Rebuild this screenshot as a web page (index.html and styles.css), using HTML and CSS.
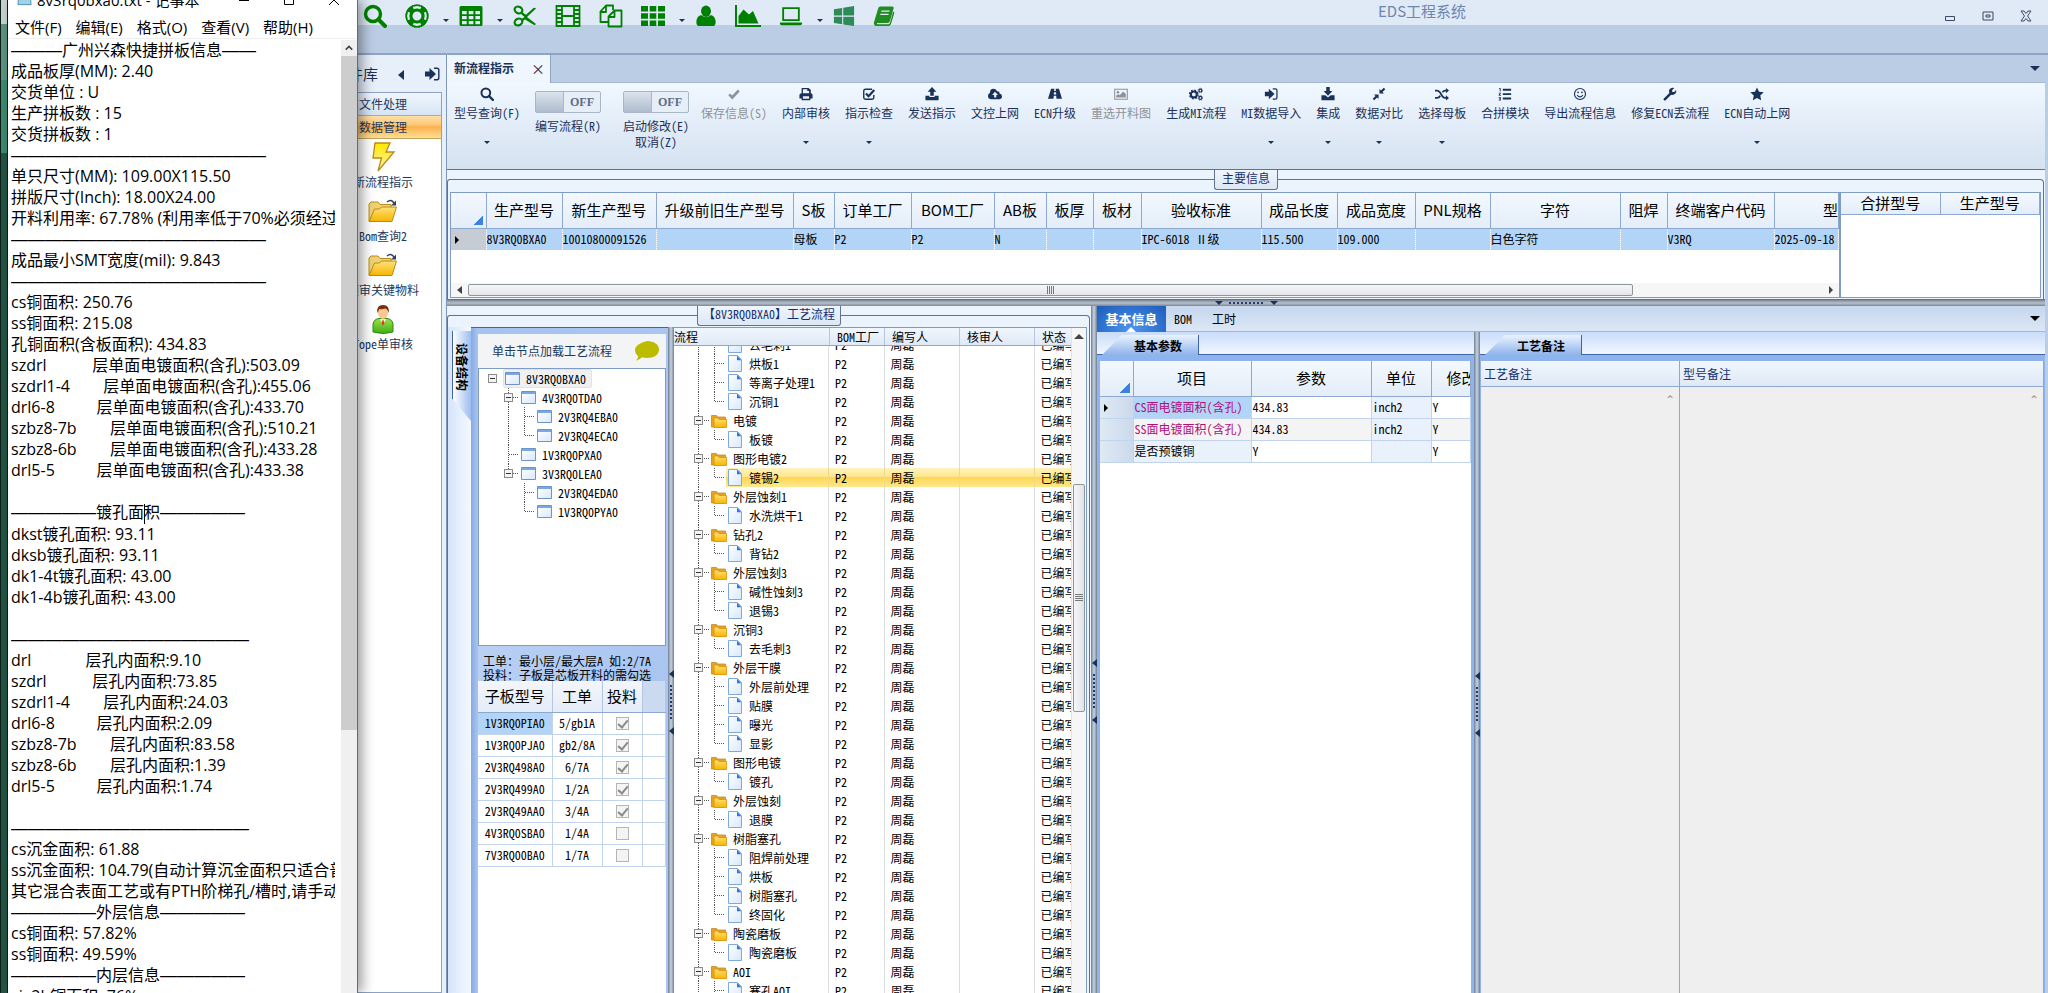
FILE: index.html
```html
<!DOCTYPE html>
<html lang="zh-CN">
<head>
<meta charset="utf-8">
<title>EDS工程系统</title>
<link rel="stylesheet" href="styles.css">
</head>
<body>
<svg class="defs" aria-hidden="true">
  <defs>
    <linearGradient id="gy" x1="0" y1="0" x2="0" y2="1"><stop offset="0" stop-color="#ffe27a"/><stop offset="1" stop-color="#f7b500"/></linearGradient>
    <linearGradient id="gb" x1="0" y1="0" x2="1" y2="1"><stop offset="0" stop-color="#ffffff"/><stop offset="1" stop-color="#d8e8fc"/></linearGradient>
    <linearGradient id="gl" x1="0" y1="0" x2="0" y2="1"><stop offset="0" stop-color="#ffe900"/><stop offset="1" stop-color="#fff0b0"/></linearGradient>
    <linearGradient id="gg" x1="0" y1="0" x2="0" y2="1"><stop offset="0" stop-color="#9be04a"/><stop offset="1" stop-color="#3fae12"/></linearGradient>
  </defs>
  <symbol id="search" viewBox="0 0 24 24"><circle cx="10" cy="10" r="7.500" fill="none" stroke="currentColor" stroke-width="3.400"/><path d="M15.500 15.500l6.500 6.500" stroke="currentColor" stroke-width="4" stroke-linecap="round"/></symbol>
  <symbol id="ring" viewBox="0 0 24 24"><circle cx="12" cy="12" r="8" fill="none" stroke="currentColor" stroke-width="7"/><g fill="none" stroke="#dfeaf6" stroke-width="3.600"><path d="M8 3.500a9.500 9.500 0 0 1 8 0M8 20.500a9.500 9.500 0 0 0 8 0M3.500 8a9.500 9.500 0 0 0 0 8M20.500 8a9.500 9.500 0 0 1 0 8"/></g><circle cx="12" cy="12" r="10.700" fill="none" stroke="currentColor" stroke-width="1.600"/></symbol>
  <symbol id="table" viewBox="0 0 24 24"><path fill="currentColor" fill-rule="evenodd" d="M2 2h20q1.500 0 1.500 1.500v17q0 1.500-1.500 1.500H2q-1.500 0-1.500-1.500v-17Q.5 2 2 2zM3 7v3.300h4.700V7zm6.700 0v3.300h4.700V7zm6.700 0v3.300H21V7zM3 12v3.300h4.700V12zm6.700 0v3.300h4.700V12zm6.700 0v3.300H21V12zM3 17v3.200h4.700V17zm6.700 0v3.200h4.700V17zm6.700 0v3.200H21V17z"/></symbol>
  <symbol id="cut" viewBox="0 0 24 24"><g fill="none" stroke="currentColor" stroke-width="2.200"><ellipse cx="5.500" cy="6" rx="4" ry="3.200" transform="rotate(25 5.500 6)"/><ellipse cx="5.500" cy="18" rx="4" ry="3.200" transform="rotate(-25 5.500 18)"/></g><path fill="currentColor" d="M8 7.500l5 3.200L20.500 4q1.500-.8 2.500.5L14 13l9 7q-1 1.500-2.800.6L12 15.500 9 17.500l-1-2L11.500 13 7.500 9.500z"/></symbol>
  <symbol id="film" viewBox="0 0 26 24"><g fill="none" stroke="currentColor" stroke-width="1.800"><path d="M1.500 2h23v20h-23zM7 2v20M19 2v20M7 12h12M1.500 6h5.500M1.500 10h5.500M1.500 14h5.500M1.500 18h5.500M19 6h5.500M19 10h5.500M19 14h5.500M19 18h5.500"/></g></symbol>
  <symbol id="copy" viewBox="0 0 24 24"><g fill="none" stroke="currentColor" stroke-width="1.800" stroke-linejoin="round"><path d="M9.500 18H1.500V7.500L7 1.500h7V6M7 1.500V8H1.500"/><path d="M15.500 6.500H22.500V22.500H9.500V12.500zM15.500 6.500V13H9.500"/></g></symbol>
  <symbol id="grid" viewBox="0 0 24 24"><path fill="currentColor" d="M0 2h7v5.500H0zM8.700 2h6.600v5.500H8.700zM17 2h7v5.500h-7zM0 9.300h7v5.400H0zM8.700 9.300h6.600v5.400H8.700zM17 9.300h7v5.400h-7zM0 16.500h7V22H0zM8.700 16.500h6.600V22H8.700zM17 16.500h7V22h-7z"/></symbol>
  <symbol id="user" viewBox="0 0 24 24"><ellipse cx="12" cy="6.800" rx="5.400" ry="6.200" fill="currentColor"/><path fill="currentColor" d="M6.500 11q5.500 4.500 11 0 5 1.500 5 8 0 4-3.500 4H5q-3.500 0-3.500-4 0-6.500 5-8z"/></symbol>
  <symbol id="area" viewBox="0 0 26 24"><path fill="currentColor" d="M0 1h2v20h24v2H0zM3.500 19.500V12l5-6.500 5.500 5 4-3.500 5.500 12.500z"/></symbol>
  <symbol id="laptop" viewBox="0 0 26 24"><path fill="none" stroke="currentColor" stroke-width="2" d="M4.500 3.500h17v13h-17z"/><path fill="currentColor" d="M1 19h24v1.500q0 1.500-2 1.500H3q-2 0-2-1.500z"/></symbol>
  <symbol id="windows" viewBox="0 0 24 24"><path fill="currentColor" d="M1 4.500l9-1.300v8.300H1zM11.200 3L23 1v10.500H11.200zM1 12.700h9v8.200L1 19.600zM11.200 12.700H23V23l-11.800-1.700z"/></symbol>
  <symbol id="book" viewBox="0 0 24 24"><path fill="currentColor" fill-rule="evenodd" d="M8 1.500h13q2 0 1.500 2l-4 14q-.5 2-2.500 2H4.500q-1 1 .5 1.500h11.500q1.500 0 2-1.500L22 7q1.500.5 1.200 2l-3.700 12q-.8 2-2.500 2H4Q.5 22.500 1 19L5.500 4Q6 1.500 8 1.500zM9.300 6l-.4 1.300h9L18.300 6zM8.200 9.500l-.4 1.300h9l.4-1.300z"/></symbol>
  <symbol id="check" viewBox="0 0 16 16"><path d="M2.500 8.500l3.500 3.500L13.500 4" fill="none" stroke="currentColor" stroke-width="3"/></symbol>
  <symbol id="print" viewBox="0 0 16 16"><path fill="currentColor" fill-rule="evenodd" d="M3 1h8l2.500 2.500V7q2 0 2 2v4H13v2H3v-2H.5V9q0-2 2.500-2zm1.500 1.500V7h7V4.500h-2v-2zM4.500 10.500v3h7v-3z"/></symbol>
  <symbol id="checksq" viewBox="0 0 16 16"><path d="M13.500 9v3q0 2-2 2H4q-2 0-2-2V4.500q0-2 2-2h7.500" fill="none" stroke="currentColor" stroke-width="1.600"/><path d="M4.500 7.500l3 3 6.500-7" fill="none" stroke="currentColor" stroke-width="2.600"/></symbol>
  <symbol id="upload" viewBox="0 0 16 16"><path fill="currentColor" d="M8 0l5 5.500h-3V10H6V5.500H3zM.5 10H5v1.500h6V10h4.500v5H.5z"/></symbol>
  <symbol id="download" viewBox="0 0 16 16"><path fill="currentColor" d="M6 0h4v4.500h3L8 10 3 4.500h3zM.5 9.500H5L8 12l3-2.500h4.500V15H.5z"/></symbol>
  <symbol id="cloud" viewBox="0 0 16 16"><path fill="currentColor" fill-rule="evenodd" d="M4 14q-4 0-4-3.700Q0 7.500 2.300 6.700 2 2 6.500 2q3 0 4 3 2.500-.6 2.800 2.500Q16 8 16 10.700 16 14 12.700 14zM8 5.500L4.700 9H7v3h2.500V9h2z"/></symbol>
  <symbol id="road" viewBox="0 0 16 16"><path fill="currentColor" fill-rule="evenodd" d="M3.500 2h3.700L7 4.500h2L8.800 2h3.700L16 13.500H9.700L9.400 10H6.600l-.3 3.500H0zM6.800 6l-.2 2.500h2.800L9.200 6z"/></symbol>
  <symbol id="image" viewBox="0 0 16 16"><path d="M.8 2.500h14.400v11.500H.8z" fill="none" stroke="currentColor" stroke-width="1.200"/><circle cx="4.500" cy="6" r="1.500" fill="currentColor"/><path fill="currentColor" d="M2.500 12v-2l2.500-2 1.500 1.300L10.500 5l3 3v4z"/></symbol>
  <symbol id="cogs" viewBox="0 0 16 16"><circle cx="5.500" cy="8.500" r="3.400" fill="none" stroke="currentColor" stroke-width="2.400"/><circle cx="5.500" cy="8.500" r="4.900" fill="none" stroke="currentColor" stroke-width="1.500" stroke-dasharray="2 1.850"/><g fill="none" stroke="currentColor"><circle cx="13" cy="4" r="1.700" stroke-width="1.400"/><circle cx="13" cy="4" r="2.700" stroke-width=".8" stroke-dasharray="1.100 1"/><circle cx="13" cy="12.500" r="1.700" stroke-width="1.400"/><circle cx="13" cy="12.500" r="2.700" stroke-width=".8" stroke-dasharray="1.100 1"/></g></symbol>
  <symbol id="signin" viewBox="0 0 16 16"><path fill="currentColor" d="M1 5.500h4.500V2L12 8l-6.500 6v-3.500H1z"/><path d="M10 2.200h3q1.800 0 1.800 1.800v8q0 1.800-1.800 1.800h-3" fill="none" stroke="currentColor" stroke-width="1.400"/></symbol>
  <symbol id="compress" viewBox="0 0 16 16"><path fill="currentColor" d="M8.500 7.500V2.300l1.700 1.700L13.500.8l1.700 1.700L12 5.800l1.700 1.700zM7.500 8.500v5.200L5.800 12l-3.300 3.200-1.700-1.700L4 10.200 2.300 8.500z"/></symbol>
  <symbol id="random" viewBox="0 0 16 16"><path d="M0 4h2.500Q4.500 4 6 6.500l2 3.500q1.500 2.500 3.500 2.500h1.500M0 12.500h2.500Q4.500 12.500 6 10M8.500 6Q10 4 11.500 4H13" fill="none" stroke="currentColor" stroke-width="2"/><path fill="currentColor" d="M12.500 1L16 4l-3.500 3zM12.500 9.500l3.500 3-3.500 3z"/></symbol>
  <symbol id="listol" viewBox="0 0 16 16"><path fill="currentColor" d="M5.500 2H15v2.200H5.500zM5.500 7H15v2.200H5.500zM5.500 12H15v2.200H5.500zM1.500 1H3v4H2V2.300h-.8zM.8 6.500H3.200V8L2 9h1.200v.9H.8V9l1.400-1.500H.8zM.8 11.500h2.400v4H.8v-.8h1.400v-.8H1v-.8h1.200v-.8H.8z"/></symbol>
  <symbol id="smile" viewBox="0 0 16 16"><circle cx="8" cy="8" r="6.300" fill="none" stroke="currentColor" stroke-width="1.300"/><path d="M4.700 9.300q3.300 4 6.600 0" fill="none" stroke="currentColor" stroke-width="1.200"/><circle cx="5.800" cy="6" r="1" fill="currentColor"/><circle cx="10.200" cy="6" r="1" fill="currentColor"/></symbol>
  <symbol id="wrench" viewBox="0 0 16 16"><path fill="currentColor" d="M1 13l6.300-6.200Q6 3.500 8.500 1.700 10.500.3 13 1.200L10.500 3.500v2.200h2.300L15 3.500q.7 2.500-1 4.300-2 1.800-4.700 1L3 15.200Q1.800 16 1 15t0-2z"/></symbol>
  <symbol id="star" viewBox="0 0 16 16"><path fill="currentColor" d="M8 .5l2.300 5 5.400.6-4 3.700 1.100 5.400L8 12.500l-4.800 2.700 1.100-5.400-4-3.700 5.400-.6z"/></symbol>
  <symbol id="page" viewBox="0 0 14 17"><path d="M.5.500h9l4 4v12H.5z" fill="url(#gb)" stroke="#7fa9de"/><path d="M9 .8l4.300 4.400H9z" fill="#2f72d8"/></symbol>
  <symbol id="folders" viewBox="0 0 16 14"><path d="M.5 1.500h5l1 1.500h8v10H.5z" fill="#e8a41c" stroke="#b98a3a" stroke-width=".8"/><path d="M3 4h4l1 1.500h7.500v8H3z" fill="url(#gy)" stroke="#e08e00" stroke-width=".8"/></symbol>
  <symbol id="win" viewBox="0 0 15 13"><path d="M.5.500h14v12H.5z" fill="url(#gb)" stroke="#6f93c4"/><path d="M1 1h13v2H1z" fill="#7aa7e6"/></symbol>
  <symbol id="openfolder" viewBox="0 0 30 24"><path d="M1 22V5l2-2h7l2 2.500h11V11" fill="#efd275" stroke="#b98a1a"/><path d="M1 22.500L6.500 10h5l2-2h15L24 22.500z" fill="url(#gy)" stroke="#b98a1a"/><path d="M19 3q4-3.500 7 1" fill="none" stroke="#33415c" stroke-width="1.400"/><path d="M28 1.500V6.500h-5z" fill="#33415c"/></symbol>
</svg>

<div class="app">
  <header class="topbar">
    <div class="tools">
      <button aria-label="查询"><svg><use href="#search"/></svg></button>
      <button class="dd" aria-label="帮助"><svg><use href="#ring"/></svg></button>
      <button class="dd" aria-label="表格"><svg><use href="#table"/></svg></button>
      <button aria-label="剪切"><svg><use href="#cut"/></svg></button>
      <button class="wide" aria-label="胶片"><svg><use href="#film"/></svg></button>
      <button aria-label="复制"><svg><use href="#copy"/></svg></button>
      <button class="dd" aria-label="网格"><svg><use href="#grid"/></svg></button>
      <button class="slim" aria-label="用户"><svg><use href="#user"/></svg></button>
      <button class="wide" aria-label="图表"><svg><use href="#area"/></svg></button>
      <button class="dd" aria-label="电脑"><svg><use href="#laptop"/></svg></button>
      <button class="slim sea" aria-label="窗口"><svg><use href="#windows"/></svg></button>
      <button class="slim leaf" aria-label="手册"><svg><use href="#book"/></svg></button>
    </div>
    <h1>EDS工程系统</h1>
    <div class="winctl">
      <button aria-label="最小化"><svg viewBox="0 0 12 12"><path d="M1.500 6.500h9v4h-9z"/></svg></button>
      <button aria-label="还原"><svg viewBox="0 0 12 12"><path d="M1 2h10v8H1zM4 5h4v2H4z"/></svg></button>
      <button aria-label="关闭"><svg viewBox="0 0 12 12"><path d="M1 1h3l2 2.500L8 1h3L7.500 6 11 11H8L6 8.500 4 11H1l3.500-5z"/></svg></button>
    </div>
  </header>
  <div class="band"></div>

  <div class="body">
    <aside class="side">
      <div class="side-head"><span>组件库</span><button aria-label="收起"><i class="tri-l"></i></button><button aria-label="固定"><svg class="i16"><use href="#signin"/></svg></button></div>
      <div class="side-body">
        <button class="acc">文件处理</button>
        <button class="acc on">数据管理</button>
        <a class="item" href="#"><svg viewBox="0 0 24 30"><path d="M4 1h15l-4 9h8L7 29l3.500-13H2z" fill="url(#gl)" stroke="#b98a1a" stroke-width="1.300"/></svg>新流程指示</a>
        <a class="item" href="#"><svg><use href="#openfolder"/></svg>Bom查询2</a>
        <a class="item" href="#"><svg><use href="#openfolder"/></svg>预审关键物料</a>
        <a class="item" href="#"><svg viewBox="0 0 24 30"><path d="M2 28V20q1-5 6-5.500h8q5 .5 6 5.500v8q-10 3-20 0z" fill="url(#gg)" stroke="#2c8a10"/><path d="M9 15h6l-3 6z" fill="#fff"/><path d="M12 15l1.500 4-1.500 3-1.500-3z" fill="#e03a1a"/><ellipse cx="12" cy="9" rx="5" ry="6" fill="#f6c98f"/><path d="M6.500 9Q5 1 12 1t5.500 8q-1-4-3-4.500-4 1-6 .5z" fill="#7a2e10"/></svg>Tope单审核</a>
      </div>
    </aside>

    <main class="main">
      <nav class="doctabs"><button class="doctab">新流程指示<span class="x">×</span></button><button class="menu-caret" aria-label="更多"><i class="tri-d"></i></button></nav>

      <div class="ribbon">
        <button class="rb d"><svg><use href="#search"/></svg>型号查询(F)</button>
        <div class="tg"><button role="switch" aria-checked="false" aria-labelledby="t1"><i></i><span>OFF</span></button><label id="t1">编写流程(R)</label></div>
        <div class="tg"><button role="switch" aria-checked="false" aria-labelledby="t2"><i></i><span>OFF</span></button><label id="t2">启动修改(E)<br>取消(Z)</label></div>
        <button class="rb" disabled><svg><use href="#check"/></svg>保存信息(S)</button>
        <button class="rb d"><svg><use href="#print"/></svg>内部审核</button>
        <button class="rb d"><svg><use href="#checksq"/></svg>指示检查</button>
        <button class="rb"><svg><use href="#upload"/></svg>发送指示</button>
        <button class="rb"><svg><use href="#cloud"/></svg>文控上网</button>
        <button class="rb"><svg><use href="#road"/></svg>ECN升级</button>
        <button class="rb" disabled><svg><use href="#image"/></svg>重选开料图</button>
        <button class="rb"><svg><use href="#cogs"/></svg>生成MI流程</button>
        <button class="rb d"><svg><use href="#signin"/></svg>MI数据导入</button>
        <button class="rb d"><svg><use href="#download"/></svg>集成</button>
        <button class="rb d"><svg><use href="#compress"/></svg>数据对比</button>
        <button class="rb d"><svg><use href="#random"/></svg>选择母板</button>
        <button class="rb"><svg><use href="#listol"/></svg>合拼模块</button>
        <button class="rb"><svg><use href="#smile"/></svg>导出流程信息</button>
        <button class="rb"><svg><use href="#wrench"/></svg>修复ECN丢流程</button>
        <button class="rb d"><svg><use href="#star"/></svg>ECN自动上网</button>
      </div>

      <section class="info">
        <h2 class="cap">主要信息</h2>
        <div class="info-grids">
          <div class="grid-box main-grid">
            <table class="big">
              <colgroup><col class="w35"><col class="w76"><col class="w94"><col class="w137"><col class="w41"><col class="w77"><col class="w83"><col class="w52"><col class="w47"><col class="w48"><col class="w120"><col class="w76"><col class="w78"><col class="w75"><col class="w130"><col class="w47"><col class="w107"><col></colgroup>
              <thead><tr><th class="corner"></th><th>生产型号</th><th>新生产型号</th><th>升级前旧生产型号</th><th>S板</th><th>订单工厂</th><th>BOM工厂</th><th>AB板</th><th>板厚</th><th>板材</th><th>验收标准</th><th>成品长度</th><th>成品宽度</th><th>PNL规格</th><th>字符</th><th>阻焊</th><th>终端客户代码</th><th class="cut">型</th></tr></thead>
              <tbody><tr class="cur"><td class="ind"><i class="tri-r"></i></td><td>8V3RQ0BXA0</td><td>10010800091526</td><td></td><td>母板</td><td>P2</td><td>P2</td><td>N</td><td></td><td></td><td>IPC-6018 Ⅱ级</td><td>115.500</td><td>109.000</td><td></td><td>白色字符</td><td></td><td>V3RQ</td><td>2025-09-18</td></tr></tbody>
            </table>
            <div class="hscroll"><i class="tri-l g"></i><div class="htrack"><div class="hthumb"><i class="grip"></i></div></div><i class="tri-r g"></i></div>
          </div>
          <div class="grid-box sub-grid">
            <table class="big short"><thead><tr><th>合拼型号</th><th>生产型号</th></tr></thead></table>
          </div>
        </div>
      </section>

      <div class="split-h"><i class="tri-d"></i><i class="dots"></i><i class="tri-d"></i></div>

      <div class="lower">
        <section class="flow">
          <h2 class="cap">【8V3RQ0BXA0】工艺流程</h2>
          <div class="flow-body">
            <div class="vtabs"><button>设备结构</button></div>
            <div class="struct">
              <div class="hint"><span>单击节点加载工艺流程</span><svg viewBox="0 0 26 20"><path d="M13 0C20 0 25 3.500 25 8.500S20 17 13 17q-3 0-5-.7Q5.500 19 2 19.800 4.500 17.500 4 15 1 12.500 1 8.500 1 3.500 13 0z" fill="#bdbb00"/></svg></div>
              <ul class="tree">
                <li class="l0"><button class="exp" aria-label="收起"></button><span class="nd sel"><svg><use href="#win"/></svg>8V3RQ0BXA0</span></li>
                <li class="l1 e"><button class="exp" aria-label="收起"></button><span class="nd"><svg><use href="#win"/></svg>4V3RQ0TDA0</span></li>
                <li class="l2"><span class="nd"><svg><use href="#win"/></svg>2V3RQ4EBA0</span></li>
                <li class="l2 end"><span class="nd"><svg><use href="#win"/></svg>2V3RQ4ECA0</span></li>
                <li class="l1"><span class="nd"><svg><use href="#win"/></svg>1V3RQ0PXA0</span></li>
                <li class="l1 e end"><button class="exp" aria-label="收起"></button><span class="nd"><svg><use href="#win"/></svg>3V3RQ0LEA0</span></li>
                <li class="l2 nov"><span class="nd"><svg><use href="#win"/></svg>2V3RQ4EDA0</span></li>
                <li class="l2 nov end"><span class="nd"><svg><use href="#win"/></svg>1V3RQ0PYA0</span></li>
              </ul>
              <p class="note">工单：最小层/最大层A 如:2/7A<br>投料：子板是芯板开料的需勾选</p>
              <div class="subs">
                <table>
                  <colgroup><col class="w74"><col class="w50"><col class="w40"><col></colgroup>
                  <thead><tr><th>子板型号</th><th>工单</th><th>投料</th><th class="fill"></th></tr></thead>
                  <tbody>
                    <tr><td class="hl">1V3RQ0PIA0</td><td>5/gb1A</td><td><input type="checkbox" aria-label="投料" checked disabled></td><td></td></tr>
                    <tr><td>1V3RQ0PJA0</td><td>gb2/8A</td><td><input type="checkbox" aria-label="投料" checked disabled></td><td></td></tr>
                    <tr><td>2V3RQ498A0</td><td>6/7A</td><td><input type="checkbox" aria-label="投料" checked disabled></td><td></td></tr>
                    <tr><td>2V3RQ499A0</td><td>1/2A</td><td><input type="checkbox" aria-label="投料" checked disabled></td><td></td></tr>
                    <tr><td>2V3RQ49AA0</td><td>3/4A</td><td><input type="checkbox" aria-label="投料" checked disabled></td><td></td></tr>
                    <tr><td>4V3RQ0SBA0</td><td>1/4A</td><td><input type="checkbox" aria-label="投料" disabled></td><td></td></tr>
                    <tr><td>7V3RQ00BA0</td><td>1/7A</td><td><input type="checkbox" aria-label="投料" disabled></td><td></td></tr>
                  </tbody>
                </table>
              </div>
            </div>
            <div class="split-v"><i class="tri-l"></i><i class="dots"></i><i class="tri-l"></i></div>
            <div class="steps">
              <div class="steps-head"><span>流程</span><span>BOM工厂</span><span>编写人</span><span>核审人</span><span>状态</span></div>
              <div class="steps-view">
                <table>
                  <colgroup><col><col class="w55"><col class="w75"><col class="w75"><col class="w37"></colgroup>
                  <tbody>
                  <tr class="c"><td><svg><use href="#page"/></svg>去毛刺1</td><td>P2</td><td>周磊</td><td></td><td>已编写</td></tr>
                  <tr class="c"><td><svg><use href="#page"/></svg>烘板1</td><td>P2</td><td>周磊</td><td></td><td>已编写</td></tr>
                  <tr class="c"><td><svg><use href="#page"/></svg>等离子处理1</td><td>P2</td><td>周磊</td><td></td><td>已编写</td></tr>
                  <tr class="c z"><td><svg><use href="#page"/></svg>沉铜1</td><td>P2</td><td>周磊</td><td></td><td>已编写</td></tr>
                  <tr class="p"><td><button class="exp" aria-label="收起"></button><svg><use href="#folders"/></svg>电镀</td><td>P2</td><td>周磊</td><td></td><td>已编写</td></tr>
                  <tr class="c z"><td><svg><use href="#page"/></svg>板镀</td><td>P2</td><td>周磊</td><td></td><td>已编写</td></tr>
                  <tr class="p"><td><button class="exp" aria-label="收起"></button><svg><use href="#folders"/></svg>图形电镀2</td><td>P2</td><td>周磊</td><td></td><td>已编写</td></tr>
                  <tr class="c z on"><td><svg><use href="#page"/></svg>镀锡2</td><td>P2</td><td>周磊</td><td></td><td>已编写</td></tr>
                  <tr class="p"><td><button class="exp" aria-label="收起"></button><svg><use href="#folders"/></svg>外层蚀刻1</td><td>P2</td><td>周磊</td><td></td><td>已编写</td></tr>
                  <tr class="c z"><td><svg><use href="#page"/></svg>水洗烘干1</td><td>P2</td><td>周磊</td><td></td><td>已编写</td></tr>
                  <tr class="p"><td><button class="exp" aria-label="收起"></button><svg><use href="#folders"/></svg>钻孔2</td><td>P2</td><td>周磊</td><td></td><td>已编写</td></tr>
                  <tr class="c z"><td><svg><use href="#page"/></svg>背钻2</td><td>P2</td><td>周磊</td><td></td><td>已编写</td></tr>
                  <tr class="p"><td><button class="exp" aria-label="收起"></button><svg><use href="#folders"/></svg>外层蚀刻3</td><td>P2</td><td>周磊</td><td></td><td>已编写</td></tr>
                  <tr class="c"><td><svg><use href="#page"/></svg>碱性蚀刻3</td><td>P2</td><td>周磊</td><td></td><td>已编写</td></tr>
                  <tr class="c z"><td><svg><use href="#page"/></svg>退锡3</td><td>P2</td><td>周磊</td><td></td><td>已编写</td></tr>
                  <tr class="p"><td><button class="exp" aria-label="收起"></button><svg><use href="#folders"/></svg>沉铜3</td><td>P2</td><td>周磊</td><td></td><td>已编写</td></tr>
                  <tr class="c z"><td><svg><use href="#page"/></svg>去毛刺3</td><td>P2</td><td>周磊</td><td></td><td>已编写</td></tr>
                  <tr class="p"><td><button class="exp" aria-label="收起"></button><svg><use href="#folders"/></svg>外层干膜</td><td>P2</td><td>周磊</td><td></td><td>已编写</td></tr>
                  <tr class="c"><td><svg><use href="#page"/></svg>外层前处理</td><td>P2</td><td>周磊</td><td></td><td>已编写</td></tr>
                  <tr class="c"><td><svg><use href="#page"/></svg>贴膜</td><td>P2</td><td>周磊</td><td></td><td>已编写</td></tr>
                  <tr class="c"><td><svg><use href="#page"/></svg>曝光</td><td>P2</td><td>周磊</td><td></td><td>已编写</td></tr>
                  <tr class="c z"><td><svg><use href="#page"/></svg>显影</td><td>P2</td><td>周磊</td><td></td><td>已编写</td></tr>
                  <tr class="p"><td><button class="exp" aria-label="收起"></button><svg><use href="#folders"/></svg>图形电镀</td><td>P2</td><td>周磊</td><td></td><td>已编写</td></tr>
                  <tr class="c z"><td><svg><use href="#page"/></svg>镀孔</td><td>P2</td><td>周磊</td><td></td><td>已编写</td></tr>
                  <tr class="p"><td><button class="exp" aria-label="收起"></button><svg><use href="#folders"/></svg>外层蚀刻</td><td>P2</td><td>周磊</td><td></td><td>已编写</td></tr>
                  <tr class="c z"><td><svg><use href="#page"/></svg>退膜</td><td>P2</td><td>周磊</td><td></td><td>已编写</td></tr>
                  <tr class="p"><td><button class="exp" aria-label="收起"></button><svg><use href="#folders"/></svg>树脂塞孔</td><td>P2</td><td>周磊</td><td></td><td>已编写</td></tr>
                  <tr class="c"><td><svg><use href="#page"/></svg>阻焊前处理</td><td>P2</td><td>周磊</td><td></td><td>已编写</td></tr>
                  <tr class="c"><td><svg><use href="#page"/></svg>烘板</td><td>P2</td><td>周磊</td><td></td><td>已编写</td></tr>
                  <tr class="c"><td><svg><use href="#page"/></svg>树脂塞孔</td><td>P2</td><td>周磊</td><td></td><td>已编写</td></tr>
                  <tr class="c z"><td><svg><use href="#page"/></svg>终固化</td><td>P2</td><td>周磊</td><td></td><td>已编写</td></tr>
                  <tr class="p"><td><button class="exp" aria-label="收起"></button><svg><use href="#folders"/></svg>陶瓷磨板</td><td>P2</td><td>周磊</td><td></td><td>已编写</td></tr>
                  <tr class="c z"><td><svg><use href="#page"/></svg>陶瓷磨板</td><td>P2</td><td>周磊</td><td></td><td>已编写</td></tr>
                  <tr class="p"><td><button class="exp" aria-label="收起"></button><svg><use href="#folders"/></svg>AOI</td><td>P2</td><td>周磊</td><td></td><td>已编写</td></tr>
                  <tr class="c"><td><svg><use href="#page"/></svg>塞孔AOI</td><td>P2</td><td>周磊</td><td></td><td>已编写</td></tr>
                  </tbody>
                </table>
              </div>
              <div class="vscroll"><i class="tri-u"></i><div class="vthumb"><i class="grip"></i></div></div>
            </div>
          </div>
        </section>

        <div class="split-v outer"><i class="tri-l"></i><i class="dots"></i><i class="tri-l"></i></div>

        <section class="detail">
          <nav class="dtabs"><button class="on">基本信息</button><button>BOM</button><button>工时</button><button class="menu-caret" aria-label="更多"><i class="tri-d k"></i></button></nav>
          <div class="dbody">
            <div class="pane params">
              <div class="ptabs"><button class="ptab">基本参数</button></div>
              <div class="pbox">
                <table class="big pt">
                  <colgroup><col class="w33"><col class="w118"><col class="w120"><col class="w60"><col></colgroup>
                  <thead><tr><th class="corner"></th><th>项目</th><th>参数</th><th>单位</th><th class="mod">修改</th></tr></thead>
                  <tbody>
                    <tr><td class="ind"><i class="tri-r"></i></td><td class="m hl">CS面电镀面积(含孔)</td><td>434.83</td><td class="ro">inch2</td><td>Y</td></tr>
                    <tr class="alt"><td class="ind"></td><td class="m">SS面电镀面积(含孔)</td><td>434.83</td><td class="ro">inch2</td><td>Y</td></tr>
                    <tr><td class="ind"></td><td class="ro">是否预镀铜</td><td>Y</td><td class="ro"></td><td>Y</td></tr>
                  </tbody>
                </table>
              </div>
            </div>
            <div class="split-v outer"><i class="tri-l"></i><i class="dots"></i><i class="tri-l"></i></div>
            <div class="pane notes">
              <div class="ptabs"><button class="ptab">工艺备注</button></div>
              <div class="pbox two">
                <div class="nt"><label for="n1">工艺备注</label><textarea id="n1"></textarea><i>⌃</i></div>
                <div class="nt"><label for="n2">型号备注</label><textarea id="n2"></textarea><i>⌃</i></div>
              </div>
            </div>
          </div>
        </section>
      </div>
    </main>
  </div>
</div>

<div class="desk"></div>
<div class="notepad">
  <div class="np-title"><svg viewBox="0 0 16 16"><path d="M2 1h12l1 13H1z" fill="#9fd3e8" stroke="#4f8fae"/><path d="M3 5h10M3 8h10" stroke="#fff"/></svg><span>8v3rq0bxa0.txt - 记事本</span>
    <button aria-label="最小化"><svg viewBox="0 0 12 12"><path d="M1 6.500h10"/></svg></button><button aria-label="最大化"><svg viewBox="0 0 12 12"><path d="M1.500 1.500h9v9h-9z"/></svg></button><button aria-label="关闭"><svg viewBox="0 0 12 12"><path d="M1 1l10 10M11 1L1 11"/></svg></button></div>
  <div class="np-menu"><button>文件(F)</button><button>编辑(E)</button><button>格式(O)</button><button>查看(V)</button><button>帮助(H)</button></div>
  <div class="np-body">
<pre><b>———</b>广州兴森快捷拼板信息<b>——</b>
成品板厚(MM): 2.40
交货单位 : U
生产拼板数 : 15
交货拼板数 : 1
<b>———————————————</b>
单只尺寸(MM): 109.00X115.50
拼版尺寸(Inch): 18.00X24.00
开料利用率: 67.78% (利用率低于70%必须经过评审)
<b>———————————————</b>
成品最小SMT宽度(mil): 9.843
<b>———————————————</b>
cs铜面积: 250.76
ss铜面积: 215.08
孔铜面积(含板面积): 434.83
szdrl           层单面电镀面积(含孔):503.09
szdrl1-4        层单面电镀面积(含孔):455.06
drl6-8          层单面电镀面积(含孔):433.70
szbz8-7b        层单面电镀面积(含孔):510.21
szbz8-6b        层单面电镀面积(含孔):433.28
drl5-5          层单面电镀面积(含孔):433.38

<b>—————</b>镀孔面<u></u>积<b>—————</b>
dkst镀孔面积: 93.11
dksb镀孔面积: 93.11
dk1-4t镀孔面积: 43.00
dk1-4b镀孔面积: 43.00

<b>——————————————</b>
drl             层孔内面积:9.10
szdrl           层孔内面积:73.85
szdrl1-4        层孔内面积:24.03
drl6-8          层孔内面积:2.09
szbz8-7b        层孔内面积:83.58
szbz8-6b        层孔内面积:1.39
drl5-5          层孔内面积:1.74

<b>——————————————</b>
cs沉金面积: 61.88
ss沉金面积: 104.79(自动计算沉金面积只适合普通)
其它混合表面工艺或有PTH阶梯孔/槽时,请手动计算
<b>—————</b>外层信息<b>—————</b>
cs铜面积: 57.82%
ss铜面积: 49.59%
<b>—————</b>内层信息<b>—————</b>
sig2b铜面积: 76%</pre>
    <div class="np-scroll"><span><svg viewBox="0 0 10 6"><path d="M1 5l4-4 4 4" fill="none" stroke="#444" stroke-width="2"/></svg></span><div></div></div>
  </div>
</div>
</body>
</html>
```

FILE: styles.css
```css
* { box-sizing: border-box; }
body {
  margin: 0;
  height: 100vh;
  overflow: hidden;
  font: 12px/16px "Noto Sans Mono CJK SC", "Noto Sans CJK SC", sans-serif;
  color: #000;
  background: #bacde4;
}
button {
  font: inherit;
  color: inherit;
  background: none;
  border: 0;
  padding: 0;
  margin: 0;
}
i { font-style: normal; display: inline-block; }
h1, h2, p, ul { margin: 0; padding: 0; font-weight: normal; }
table { border-collapse: collapse; table-layout: fixed; width: 100%; }
th { font-weight: normal; }
th, td { padding: 0; white-space: nowrap; overflow: hidden; }
.defs { position: absolute; width: 0; height: 0; }

/* arrows */
.tri-l, .tri-r, .tri-d, .tri-u { width: 0; height: 0; flex: none; border: 4px solid transparent; }
.tri-l { border-width: 5px 6px 5px 0; border-right-color: #1a3158; }
.tri-r { border-width: 4px 0 4px 4px; border-left-color: #000; }
.tri-d { border-width: 5px 5px 0; border-top-color: #1a3158; }
.tri-u { border-width: 0 5px 5px; border-bottom-color: #444; }
.tri-d.k { border-top-color: #000; }
.tri-l.g { border-right-color: #444; border-width: 4px 5px 4px 0; }
.tri-r.g { border-left-color: #444; }

/* shell */
.app { display: flex; flex-direction: column; height: 100vh; }
.topbar {
  height: 25px;
  display: flex;
  align-items: center;
  background: #dfeaf6;
  padding: 0 16px 0 363px;
  flex: none;
  position: relative;
}
.tools { display: flex; align-items: flex-start; gap: 18px; height: 18px; color: #008000; }
.tools button { display: flex; position: relative; width: 24px; height: 24px; }
.tools svg { width: 100%; height: 24px; }
.tools .wide { width: 26px; }
.tools .slim { width: 22px; }
.tools .dd { margin-right: 12px; }
.tools .dd::after {
  content: "";
  position: absolute;
  left: calc(100% + 14px);
  top: 15px;
  border: 3px solid transparent;
  border-top-color: #1a3158;
  border-bottom: 0;
}
.tools .sea { color: #2e8b57; }
.tools .leaf { color: #228b22; }
.topbar h1 { position: absolute; left: 1378px; top: 0; font: 15px/22px "Noto Sans CJK SC", sans-serif; color: #6d86ae; }
.winctl { margin-left: auto; display: flex; gap: 26px; padding-top: 6px; }
.winctl svg { width: 12px; height: 12px; display: block; fill: none; stroke: #3c4a60; }
.band { height: 30px; flex: none; background: #bacde4; border-bottom: 2px solid #8ea4c3; }
.body { flex: 1; min-height: 0; display: flex; }

/* side panel */
.side { width: 447px; flex: none; padding: 0 4px 0 324px; background: #e6effa; border-right: 1px solid #7f98ba; display: flex; flex-direction: column; }
.side-head { height: 37px; display: flex; align-items: center; gap: 20px; padding-left: 9px; font: 15px/20px "Noto Sans CJK SC", sans-serif; color: #1a3158; }
.i16 { width: 16px; height: 16px; display: block; }
.side-body { flex: 1; background: #fff; border: 1px solid #8ba3c4; display: flex; flex-direction: column; }
.acc { height: 23px; border-bottom: 1px solid #9aaecb; background: linear-gradient(#f0f6fd, #d6e4f4); color: #1e395b; }
.acc.on { background: linear-gradient(#fde0a8, #fdc878 40%, #fbb04e 50%, #fde092); border-color: #c2a25c; }
.item { display: flex; flex-direction: column; align-items: center; height: 54px; padding-top: 3px; color: #1e395b; text-decoration: none; }
.item svg { width: 30px; height: 30px; margin-bottom: 2px; flex: none; }

/* document area */
.main { flex: 1; min-width: 0; display: flex; flex-direction: column; padding-right: 3px; }
.doctabs { height: 28px; display: flex; justify-content: space-between; align-items: center; border-bottom: 1px solid #a3b7d1; flex: none; }
.doctab { height: 28px; width: 104px; background: #f0f6fd; border-right: 1px solid #8ea4c3; font-weight: bold; color: #1a3158; display: flex; align-items: center; justify-content: space-between; padding: 0 5px 2px 7px; }
.x { font-weight: normal; font-size: 14px; }
.menu-caret { margin-left: auto; width: 20px; display: flex; justify-content: center; }
.ribbon { height: 87px; flex: none; display: flex; gap: 15px; padding: 4px 7px 0; background: linear-gradient(#f1f8ff, #e2ecf8 50%, #d5e2f0); border-bottom: 1px solid #5e7390; color: #1a3158; }
.rb { display: flex; flex-direction: column; align-items: center; height: 62px; white-space: nowrap; flex: none; }
.rb svg { width: 14px; height: 14px; margin-bottom: 4px; }
.rb[disabled] { color: #8e9398; }
.rb.d::after { content: ""; border: 3px solid transparent; border-top-color: #1a3158; border-bottom: 0; margin-top: 20px; }
.tg { display: flex; flex-direction: column; align-items: flex-start; width: 73px; white-space: nowrap; text-align: center; flex: none; }
.tg + .tg { width: 63px; }
.tg button { display: flex; width: 66px; height: 22px; margin: 4px 0 5px; border: 1px solid #a9b6c8; border-radius: 2px; background: #e6eef8; flex: none; }
.tg i { width: 28px; background: linear-gradient(#dbe3ee, #aebccd); border-right: 1px solid #a9b6c8; }
.tg span { flex: 1; font: bold 12px/20px "Liberation Serif", serif; color: #5f6f86; }

.info { position: relative; height: 130px; flex: none; background: #ebf4fd; border-bottom: 1px solid #5e7390; padding: 22px 4px 1px 3px; }
.info::before, .flow::before { content: ""; position: absolute; inset: 9px 1px 0 0; border: 1px solid #5e7390; border-bottom: 0; border-radius: 3px 4px 0 0; pointer-events: none; }
.cap { position: absolute; left: 50%; top: 0; transform: translateX(-50%); height: 20px; padding: 0 7px; border: 1px solid #5e7390; border-top: 0; border-radius: 0 0 3px 3px; background: linear-gradient(#eef5fd, #dde8f5); color: #15306f; white-space: nowrap; font-size: 12px; line-height: 16px; z-index: 1; }
.info-grids { display: flex; height: 106px; }
.grid-box { background: #fff; border: 1px solid #7f9cc4; display: flex; flex-direction: column; overflow: hidden; }
.main-grid { flex: 1; min-width: 0; }
.sub-grid { width: 201px; flex: none; }
.big th { height: 35px; font: 15px/20px "Noto Sans CJK SC", sans-serif; background: linear-gradient(#f3f8fe, #e3edf9); border: 1px solid #8ea9cf; border-top: 0; border-left: 0; }
.big.short th { height: 21px; }
.big td { height: 22px; }
.big .cut { text-align: right; }
.big .mod { text-align: left; padding-left: 15px; }
.big .corner { background: linear-gradient(135deg, transparent 50%, #3f82dc 50%) right 3px bottom 3px / 10px 10px no-repeat, linear-gradient(#f3f8fe, #e3edf9); }
.cur td { background: #b2d4f7; border-right: 1px dotted #c9dff5; }
.cur .ind { background: #c5ccd4; padding-left: 4px; }
.hscroll { margin-top: auto; height: 14px; display: flex; align-items: center; gap: 6px; padding: 0 6px; background: #f6f6f6; }
.htrack { flex: 1; height: 100%; }
.hthumb { width: 86%; height: 12px; margin-top: 1px; border: 1px solid #8f959d; border-radius: 2px; background: linear-gradient(#f5f6f8, #e2e6eb); display: flex; justify-content: center; align-items: center; }
.grip { width: 8px; height: 8px; background: repeating-linear-gradient(90deg, #777 0 1px, transparent 1px 2px); }

.split-h { height: 6px; flex: none; background: linear-gradient(#7d8794, #b7bfca 50%, #7d8794); display: flex; justify-content: center; align-items: center; gap: 6px; }
.split-h .tri-d { border-width: 4px 4px 0; }
.split-h .dots { width: 35px; height: 2px; background: repeating-linear-gradient(90deg, #223a70 0 2px, transparent 2px 4px); }
.split-v { width: 6px; flex: none; background: linear-gradient(90deg, #6f7f95, #c8d3e0 50%, #6f7f95); display: flex; flex-direction: column; align-items: center; justify-content: center; gap: 7px; padding-top: 84px; }
.split-v .tri-l { border-width: 4px 5px 4px 0; }
.split-v .dots { width: 2px; height: 35px; background: repeating-linear-gradient(#223a70 0 2px, transparent 2px 4px); }

/* process flow */
.lower { flex: 1; min-height: 0; display: flex; }
.flow { position: relative; width: 644px; flex: none; background: #ebf4fd; padding: 21px 4px 0 1px; display: flex; }
.flow .cap { padding: 0 5px; }
.flow-body { flex: 1; min-width: 0; display: flex; position: relative; border-right: 1px solid #7f9cc4; }
.vtabs { width: 23px; flex: none; background: linear-gradient(90deg, #d5e4fb, #f4f9ff); padding: 4px 0 0 4px; }
.vtabs button { width: 19px; height: 90px; writing-mode: vertical-rl; text-orientation: sideways; font-weight: bold; line-height: 15px; text-align: left; padding-top: 12px; background: linear-gradient(90deg, #fff, #9dbdf0); border-left: 1px solid #3f64a8; clip-path: polygon(0 0, 100% 0, 100% 100%, 0 75%); }
.struct { width: 197px; flex: none; padding: 6px 2px 0 7px; background: linear-gradient(90deg, #86aae4, #a6c2ee 6px, #a9c5f0); border-top: 1px solid #3f64a8; display: flex; flex-direction: column; }
.hint { height: 34px; background: #f3f4f6; display: flex; align-items: center; justify-content: space-between; padding: 0 6px 0 14px; color: #1e395b; flex: none; }
.hint svg { width: 26px; height: 20px; }
.tree { list-style: none; height: 278px; flex: none; background: #fff; border: 1px solid #7f9cc4; }
.tree li { height: 19px; display: flex; align-items: center; position: relative; --dot: repeating-linear-gradient(#555 0 1px, transparent 1px 2px); --hdot: repeating-linear-gradient(90deg, #555 0 1px, transparent 1px 2px); background-repeat: no-repeat; }
.tree .l0 { padding-left: 9px; }
.tree .l1 { padding-left: 41px; background-image: var(--dot), var(--hdot); background-position: 29px 0, 30px 50%; background-size: 1px 100%, 9px 1px; }
.tree .l1.end { background-size: 1px 50%, 9px 1px; }
.tree .e { padding-left: 25px; }
.tree .l2 { padding-left: 57px; background-image: var(--dot), var(--dot), var(--hdot); background-position: 29px 0, 45px 0, 46px 50%; background-size: 1px 100%, 1px 100%, 9px 1px; }
.tree .l2.end { background-size: 1px 100%, 1px 50%, 9px 1px; }
.tree .l2.nov { background-size: 0 0, 1px 100%, 9px 1px; }
.tree .l2.nov.end { background-size: 0 0, 1px 50%, 9px 1px; }
.exp { width: 9px; height: 9px; flex: none; border: 1px solid #8a8a8a; background: linear-gradient(#333, #333) center / 5px 1px no-repeat, #f4f4f4; margin-right: 7px; }
.nd { display: flex; align-items: center; gap: 6px; line-height: 17px; padding: 0 5px 0 1px; }
.nd svg { width: 15px; height: 13px; }
.nd.sel { background: #f0f0f0; border-radius: 2px; box-shadow: 0 0 0 1px #e2e2e2; }
.note { height: 35px; padding: 8px 0 0 5px; line-height: 14px; flex: none; white-space: nowrap; background: linear-gradient(90deg, #b9d0f3, #a9c5f0); }
.subs { flex: 1; background: #fff; overflow: hidden; }
.subs th { height: 31px; font: 15px/20px "Noto Sans CJK SC", sans-serif; background: linear-gradient(#f3f6fb, #e4ecf7); border-right: 1px solid #b3c6e2; border-bottom: 1px solid #8ea9cf; }
.subs .fill { background: #cbdaf0; }
.subs td { height: 22px; text-align: center; border-right: 1px solid #c2d3ee; border-bottom: 1px solid #c2d3ee; }
.subs .hl { background: #b2d4f7; }
.subs input { appearance: none; display: block; width: 13px; height: 13px; margin: 0 auto; border: 1px solid #b5b5b5; background: #f4f4f4; }
.subs input:checked::after { content: ""; display: block; width: 4px; height: 8px; margin: 0 0 0 3px; border: solid #8a8a8a; border-width: 0 2px 2px 0; transform: rotate(40deg); }

.steps { flex: 1; min-width: 0; display: grid; grid-template-columns: 1fr 15px; grid-template-rows: 18px 1fr; background: #fff; border-top: 1px solid #7f9cc4; }
.steps-head { display: grid; grid-template-columns: 1fr 55px 75px 75px 37px; background: linear-gradient(#f1f6fd, #dfe9f6); border-bottom: 1px solid #8ea9cf; line-height: 17px; }
.steps-head span + span { padding-left: 7px; border-left: 1px solid #b3c6e2; white-space: nowrap; }
.steps-view { grid-row: 2; overflow: hidden; min-height: 0; }
.steps-view table { margin-top: -11px; }
.steps-view td { height: 19px; line-height: 19px; padding-left: 6px; border-right: 1px solid #d9dde2; vertical-align: top; }
.steps-view td:last-child { border-right: 0; }
.steps-view tr { --dot: repeating-linear-gradient(#555 0 1px, transparent 1px 2px); --hdot: repeating-linear-gradient(90deg, #555 0 1px, transparent 1px 2px); }
.steps-view td:first-child { display: flex; align-items: center; background-repeat: no-repeat; background-image: var(--dot), var(--dot), var(--hdot); }
.c td:first-child { padding-left: 54px; gap: 7px; background-position: 24px 0, 40px 0, 41px 50%; background-size: 1px 100%, 1px 100%, 10px 1px; }
.c.z td:first-child { background-size: 1px 100%, 1px 50%, 10px 1px; }
.p td:first-child { padding-left: 20px; background-position: 24px 0, 0 0, 28px 50%; background-size: 1px 100%, 0 0, 8px 1px; }
.c svg { width: 14px; height: 17px; flex: none; }
.p svg { width: 16px; height: 14px; flex: none; margin: 0 6px 0 1px; }
.steps-view .on td { background: linear-gradient(#fff3bf, #ffe68c 45%, #fdd750 50%, #ffe88f); border-right-color: #f2d98a; }
.steps-view .on td:first-child { background: linear-gradient(#fff3bf, #ffe68c 45%, #fdd750 50%, #ffe88f) 52px 0 no-repeat, var(--dot) 24px 0 / 1px 100% no-repeat, var(--dot) 40px 0 / 1px 50% no-repeat, var(--hdot) 41px 50% / 10px 1px no-repeat; }
.vscroll { grid-column: 2; grid-row: 1 / 3; background: #f6f6f6; border-left: 1px solid #e3e3e3; display: flex; flex-direction: column; align-items: center; padding: 6px 1px 0; }
.vthumb { width: 100%; height: 228px; margin-top: 145px; border: 1px solid #8f959d; border-radius: 2px; background: linear-gradient(90deg, #f5f6f8, #dfe3e9); display: flex; align-items: center; justify-content: center; }
.vthumb .grip { background: repeating-linear-gradient(#777 0 1px, transparent 1px 2px); }

/* detail */
.detail { flex: 1; min-width: 0; display: flex; flex-direction: column; }
.dtabs { height: 26px; flex: none; display: flex; align-items: center; background: linear-gradient(#c5d7ee, #dbe7f5); border-bottom: 1px solid #a3b7d1; }
.dtabs button { padding: 0 8px; height: 26px; }
.dtabs button + button + button { margin-left: 4px; }
.dtabs .on { font: bold 13px/25px "Noto Sans CJK SC", sans-serif; color: #fff; background: radial-gradient(at 50% 90%, #4f94ec, #1c5cbc); width: 69px; padding: 0; position: relative; }
.dtabs .on::after { content: ""; position: absolute; left: 29px; bottom: 0; border: 5px solid transparent; border-bottom-color: #fff; border-top: 0; }
.dtabs button.menu-caret { margin-left: auto; padding: 0; align-items: center; }
.dbody { flex: 1; min-height: 0; display: flex; }
.pane { display: flex; flex-direction: column; min-width: 0; }
.params { flex: 0 0 377px; }
.notes { flex: 1; }
.ptabs { height: 23px; flex: none; background: linear-gradient(#c9dcfa, #f0f6ff); border-bottom: 1px solid #3f64a8; padding: 3px 0 0 5px; display: flex; }
.ptab { position: relative; height: 20px; width: 97px; font-weight: bold; line-height: 19px; padding-left: 16px; text-align: center; background: linear-gradient(#eaf3ff, #8fb3ec); border-right: 1px solid #3f64a8; clip-path: polygon(20px 0, 100% 0, 100% 100%, 0 100%); }
.pbox { flex: 1; background: #fff; border: solid #8fb3ec; border-width: 6px 3px 0 3px; overflow: hidden; }
.pt td { border-right: 1px solid #c2d3ee; border-bottom: 1px solid #c2d3ee; padding-left: 1px; }
.pt .ro { background: #e8f1fc; }
.pt .alt td { background: #f4f4f4; }
.pt .alt .ro { background: #e8f1fc; }
.pt .m { color: #b0107c; }
.pt .hl { background: #b2d4f7; }
.pt .ind, .pt .alt .ind { background: linear-gradient(90deg, #dfe9f5, #cbd9ea); padding-left: 4px; }
.two { display: grid; grid-template-columns: 199px 1fr; border-width: 6px 1px 0 1px; }
.nt { position: relative; display: flex; flex-direction: column; border-right: 1px solid #8ea9cf; }
.nt label { height: 26px; line-height: 25px; padding-left: 3px; background: linear-gradient(#f1f6fd, #dfe9f6); border-bottom: 1px solid #8ea9cf; color: #15306f; }
.nt textarea { flex: 1; resize: none; border: 0; background: #efefef; }
.nt i { position: absolute; right: 4px; top: 30px; color: #999; }

/* column widths */
.w33 { width: 33px; } .w35 { width: 35px; } .w37 { width: 37px; } .w40 { width: 40px; } .w41 { width: 41px; }
.w47 { width: 47px; } .w48 { width: 48px; } .w50 { width: 50px; } .w52 { width: 52px; } .w55 { width: 55px; }
.w60 { width: 60px; } .w74 { width: 74px; } .w75 { width: 75px; } .w76 { width: 76px; } .w77 { width: 77px; }
.w78 { width: 78px; } .w83 { width: 83px; } .w94 { width: 94px; } .w107 { width: 107px; } .w118 { width: 118px; }
.w120 { width: 120px; } .w130 { width: 130px; } .w137 { width: 137px; }

/* desktop edge and floating editor window */
.desk { position: absolute; left: 0; top: 0; width: 8px; height: 100vh; background: linear-gradient(#c9d4d2 0 24px, #5d9484 24px 80px, #3f8a70 80px 153px, #235646 153px); border-right: 1px solid #0c1f19; border-left: 1px solid #0c1f19; }
.notepad { position: absolute; left: 8px; top: 0; width: 350px; height: 100vh; background: #fff; border-right: 1px solid #6a6a6a; box-shadow: 4px 0 12px rgba(0, 0, 0, .4); display: flex; flex-direction: column; font: 16px/21px "Open Sans", "Noto Sans CJK SC", sans-serif; overflow: hidden; }
.np-title { height: 14px; flex: none; display: flex; align-items: flex-end; font-size: 15px; padding: 0 17px 0 9px; }
.np-title > svg { width: 15px; height: 16px; margin: 0 5px 7px 0; }
.np-title span { flex: 1; white-space: nowrap; line-height: 28px; }
.np-title button { margin-left: 33px; padding-bottom: 8px; }
.np-title button svg { display: block; width: 12px; height: 12px; fill: none; stroke: #000; }
.np-menu { height: 24px; flex: none; display: flex; align-items: center; gap: 14px; padding: 2px 0 0 7px; font-size: 15px; }
.np-body { flex: 1; min-height: 0; display: flex; padding-top: 1px; border-top: 1px solid #eee; }
pre { flex: 1; min-width: 0; margin: 0 6px 0 3px; font: inherit; overflow: hidden; }
pre b { font: 17px/18px "Liberation Sans", sans-serif; }
pre u { display: inline-block; width: 1px; height: 20px; margin-right: -1px; background: #000; vertical-align: middle; }
.np-scroll { width: 16px; flex: none; background: #f0f0f0; }
.np-scroll span { display: flex; height: 16px; align-items: center; justify-content: center; }
.np-scroll svg { width: 8px; height: 6px; }
.np-scroll div { height: 674px; background: #cdcdcd; }
```
